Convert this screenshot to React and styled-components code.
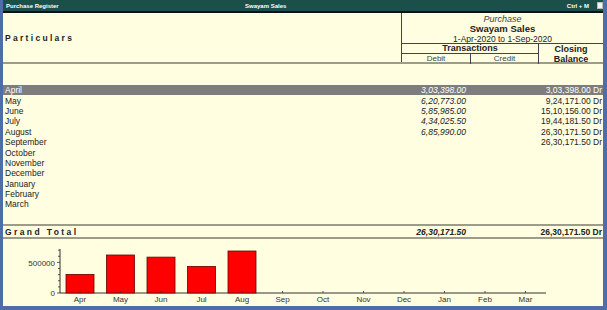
import React from "react";
import styled, { createGlobalStyle } from "styled-components";

const Global = createGlobalStyle`
  html, body { margin: 0; padding: 0; background: #4d6ea6; }
  body { font-family: "Liberation Sans", Arial, sans-serif; }
`;

const Window = styled.div`
  width: 607px;
  height: 310px;
  box-sizing: border-box;
  display: flex;
  flex-direction: column;
  background: #fffee0;
  border-left: 3px solid #4d6ea6;
  border-right: 4px solid #4d6ea6;
  border-bottom: 4px solid #4d6ea6;
  overflow: hidden;
`;

const TitleBar = styled.div`
  height: 11px;
  flex: none;
  background: #1b4f49;
  margin-left: -3px;
  margin-right: -4px;
  display: grid;
  grid-template-columns: 239px auto 1fr;
  align-items: center;
  padding: 0 4px 0 6px;
  color: #fff;
  font-size: 6px;
  font-weight: bold;
  border-bottom: 2px solid #111;
`;

const TitleRight = styled.div`
  justify-self: end;
  display: flex;
  align-items: center;
  gap: 8px;
`;

const CloseBox = styled.span`
  width: 6px;
  height: 7px;
  background: #f4f4f4;
  border: 1px solid #bbb;
  box-sizing: border-box;
`;

const Header = styled.div`
  display: flex;
  height: 49px;
  flex: none;
  border-bottom: 2px solid #9c9c88;
`;

const Particulars = styled.div`
  width: 396px;
  display: flex;
  align-items: center;
  padding-left: 2px;
  font-size: 8.5px;
  font-weight: bold;
  letter-spacing: 2.3px;
  color: #222;
`;

const RightHead = styled.div`
  flex: 1;
  border-left: 1px solid #444;
  display: flex;
  flex-direction: column;
  color: #222;
`;

const Caption = styled.div`
  text-align: center;
  font-size: ${(p) => p.$size || 9}px;
  font-style: ${(p) => (p.$italic ? "italic" : "normal")};
  font-weight: ${(p) => (p.$bold ? "bold" : "normal")};
  line-height: 10px;
  color: ${(p) => (p.$muted ? "#444" : "#222")};
`;

const TitleBlock = styled.div`
  padding-top: 1px;
  height: 31px;
  box-sizing: border-box;
  border-bottom: 1px solid #444;
`;

const ColHeads = styled.div`
  flex: 1;
  display: grid;
  grid-template-columns: 137px 1fr;
`;

const TxHead = styled.div`
  border-right: 1px solid #444;
  display: flex;
  flex-direction: column;
`;

const TxTitle = styled.div`
  height: 9px;
  border-bottom: 1px solid #444;
  font-size: 9px;
  font-weight: bold;
  text-align: center;
  line-height: 9px;
`;

const SubHeads = styled.div`
  flex: 1;
  display: grid;
  grid-template-columns: 69px 1fr;
  font-size: 8px;
  color: #444;
  text-align: center;
  line-height: 9px;
`;

const SubHead = styled.div`
  border-right: ${(p) => (p.$divider ? "1px solid #444" : "none")};
`;

const Closing = styled.div`
  font-size: 9px;
  font-weight: bold;
  text-align: center;
  line-height: 9.5px;
  padding-top: 1px;
`;

const Body = styled.div`
  padding-top: 21px;
  height: 160px;
  flex: none;
  box-sizing: border-box;
`;

const Row = styled.div`
  display: grid;
  grid-template-columns: 332px 131px 70px 67px;
  height: 10.4px;
  align-items: center;
  font-size: 8.5px;
  background: ${(p) => (p.$active ? "#7d7d7d" : "transparent")};
  color: ${(p) => (p.$active ? "#fff" : "#222")};
`;

const Name = styled.div`
  padding-left: 2px;
`;

const Num = styled.div`
  text-align: right;
  font-style: ${(p) => (p.$italic ? "italic" : "normal")};
  padding-right: ${(p) => p.$pad || 0}px;
`;

const TotalRow = styled.div`
  display: grid;
  grid-template-columns: 332px 131px 70px 67px;
  height: 11px;
  flex: none;
  align-items: center;
  border-top: 2px solid #9c9c88;
  border-bottom: 2px solid #9c9c88;
  font-size: 8.5px;
  font-weight: bold;
  color: #222;
`;

const TotalLabel = styled.div`
  padding-left: 2px;
  letter-spacing: 2.4px;
`;

const ChartArea = styled.div`
  flex: 1;
`;

const rows = [
  ["April", "3,03,398.00", "3,03,398.00 Dr"],
  ["May", "6,20,773.00", "9,24,171.00 Dr"],
  ["June", "5,85,985.00", "15,10,156.00 Dr"],
  ["July", "4,34,025.50", "19,44,181.50 Dr"],
  ["August", "6,85,990.00", "26,30,171.50 Dr"],
  ["September", "", "26,30,171.50 Dr"],
  ["October", "", ""],
  ["November", "", ""],
  ["December", "", ""],
  ["January", "", ""],
  ["February", "", ""],
  ["March", "", ""],
];

const chartData = [
  ["Apr", 303398],
  ["May", 620773],
  ["Jun", 585985],
  ["Jul", 434025.5],
  ["Aug", 685990],
  ["Sep", 0],
  ["Oct", 0],
  ["Nov", 0],
  ["Dec", 0],
  ["Jan", 0],
  ["Feb", 0],
  ["Mar", 0],
];

function Chart() {
  const base = 54;
  const k = 38 / 620773;
  const axisX = 57;
  const ticks = [];
  for (let v = 0; v <= 700000; v += 100000) {
    const y = base - v * k;
    ticks.push(
      <line key={v} x1={v % 500000 === 0 ? axisX - 3 : axisX - 2} x2={axisX} y1={y} y2={y} stroke="#333" strokeWidth="0.8" />
    );
  }
  return (
    <svg width="600" height="66" viewBox="0 0 600 66">
      <line x1={axisX} x2={axisX} y1={10} y2={base} stroke="#333" strokeWidth="1" />
      <line x1={axisX} x2={543} y1={base} y2={base} stroke="#333" strokeWidth="1" />
      {ticks}
      <text x="52" y="27" fontSize="8" textAnchor="end" fill="#333" fontFamily="Liberation Sans, Arial, sans-serif">500000</text>
      <text x="52" y="57" fontSize="8" textAnchor="end" fill="#333" fontFamily="Liberation Sans, Arial, sans-serif">0</text>
      {chartData.map(([m, v], i) => {
        const cx = 77 + i * 40.5;
        const h = v * k;
        return (
          <g key={m}>
            {v > 0 && (
              <rect x={cx - 14} y={base - h} width="28" height={h} fill="#ff0000" stroke="#6a0000" strokeWidth="0.8" />
            )}
            <line x1={cx} x2={cx} y1={base - 2} y2={base} stroke="#333" strokeWidth="0.8" />
            <text x={cx} y="63" fontSize="8" textAnchor="middle" fill="#333" fontFamily="Liberation Sans, Arial, sans-serif">{m}</text>
          </g>
        );
      })}
    </svg>
  );
}

export default function App() {
  return (
    <>
      <Global />
      <Window>
        <TitleBar>
          <span>Purchase Register</span>
          <span>Swayam Sales</span>
          <TitleRight>
            <span>Ctrl + M</span>
            <CloseBox />
          </TitleRight>
        </TitleBar>
        <Header>
          <Particulars>Particulars</Particulars>
          <RightHead>
            <TitleBlock>
              <Caption $italic $muted>Purchase</Caption>
              <Caption $bold $size={9.5}>Swayam Sales</Caption>
              <Caption $size={8.5}>1-Apr-2020 to 1-Sep-2020</Caption>
            </TitleBlock>
            <ColHeads>
              <TxHead>
                <TxTitle>Transactions</TxTitle>
                <SubHeads>
                  <SubHead $divider>Debit</SubHead>
                  <SubHead>Credit</SubHead>
                </SubHeads>
              </TxHead>
              <Closing>
                Closing
                <br />
                Balance
              </Closing>
            </ColHeads>
          </RightHead>
        </Header>
        <Body>
          {rows.map(([n, d, c], i) => (
            <Row key={n} $active={i === 0}>
              <Name>{n}</Name>
              <Num $italic>{d}</Num>
              <div />
              <Num $pad={1}>{c}</Num>
            </Row>
          ))}
        </Body>
        <TotalRow>
          <TotalLabel>Grand Total</TotalLabel>
          <Num $italic>26,30,171.50</Num>
          <div />
          <Num $pad={1}>26,30,171.50 Dr</Num>
        </TotalRow>
        <ChartArea>
          <Chart />
        </ChartArea>
      </Window>
    </>
  );
}
